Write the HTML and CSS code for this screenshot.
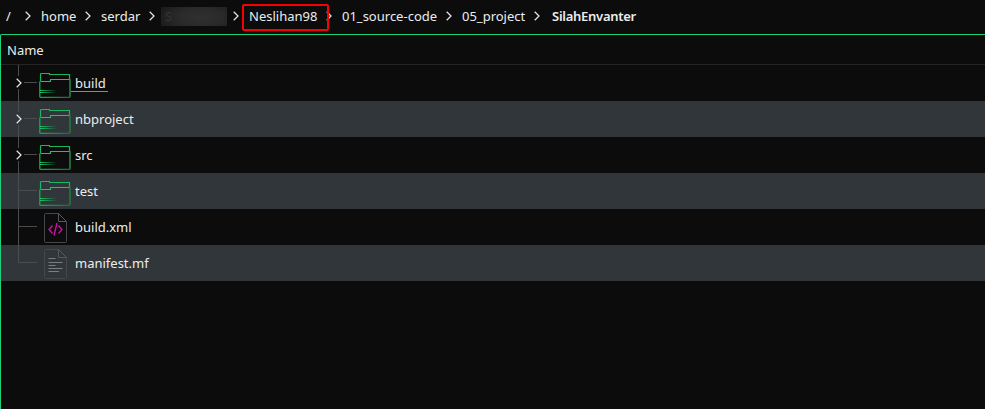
FILE: index.html
```html
<!DOCTYPE html>
<html lang="en">
<head>
<meta charset="utf-8">
<title>SilahEnvanter</title>
<link rel="stylesheet" href="styles.css">
</head>
<body>
<svg class="defs" width="0" height="0">
  <defs>
    <linearGradient id="body" x1="0" x2="1"><stop offset="0" stop-color="#13a653"/><stop offset=".5" stop-color="#1a8a4a"/><stop offset="1" stop-color="#1f6a3d"/></linearGradient>
    <linearGradient id="fade" x1="0" x2="1"><stop offset="0" stop-color="#13c95f"/><stop offset="1" stop-color="#13c95f" stop-opacity="0"/></linearGradient>
    <symbol id="chevron" viewBox="0 0 6 10"><path d="M.7 .7 5 5 .7 9.3" fill="none" stroke="#e4e4e4" stroke-width="1.25"/></symbol>
    <symbol id="folder" viewBox="0 0 32 26">
      <path d="M1.5 9V2Q1.5 1.5 2.5 1.5H10.5V2.5H30.5V7" fill="none" stroke="#17b85f" stroke-width="1.2"/>
      <path d="M1.5 9.5Q.8 9.5 .8 10.5V24.5Q.8 25.3 1.5 25.3H30Q31.3 25.3 31.3 24V7.5H30" fill="none" stroke="url(#body)" stroke-width="1.3"/>
      <path d="M1.5 9.5H11.5V7.5H30.5" fill="none" stroke="#1bc465" stroke-width="1.1"/>
      <path d="M30.8 8V25" stroke="#22703f" stroke-width="1.4"/>
      <path d="M1 18h17v1H1zM1 20h17v1H1z" fill="url(#fade)"/>
    </symbol>
    <symbol id="sheet" viewBox="0 0 24 30">
      <path d="M14.5 .5H1.5Q.5 .5 .5 1.5V28.5Q.5 29.5 1.5 29.5H21.5Q22.5 29.5 22.5 28.5V8.5Z" fill="none" stroke="#454748"/>
      <path d="M14.5 .5V8.5H22.5Z" fill="none" stroke="#56585a"/>
    </symbol>
  </defs>
</svg>

<nav class="path">
  <span class="crumb">/<svg class="chev"><use href="#chevron"/></svg></span>
  <span class="crumb">home<svg class="chev"><use href="#chevron"/></svg></span>
  <span class="crumb">serdar<svg class="chev"><use href="#chevron"/></svg></span>
  <span class="crumb"><span class="hidden-name">S</span><svg class="chev"><use href="#chevron"/></svg></span>
  <span class="crumb marked">Neslihan98<svg class="chev"><use href="#chevron"/></svg></span>
  <span class="crumb">01_source-code<svg class="chev"><use href="#chevron"/></svg></span>
  <span class="crumb">05_project<svg class="chev"><use href="#chevron"/></svg></span>
  <span class="crumb current">SilahEnvanter</span>
</nav>

<main class="view">
  <header class="head">Name</header>
  <ul class="tree">
    <li class="row"><span class="branch open"><svg class="chev"><use href="#chevron"/></svg></span><svg class="folder"><use href="#folder"/></svg><span class="name hovered">build</span></li>
    <li class="row"><span class="branch open"><svg class="chev"><use href="#chevron"/></svg></span><svg class="folder"><use href="#folder"/></svg><span class="name">nbproject</span></li>
    <li class="row"><span class="branch open"><svg class="chev"><use href="#chevron"/></svg></span><svg class="folder"><use href="#folder"/></svg><span class="name">src</span></li>
    <li class="row"><span class="branch"></span><svg class="folder"><use href="#folder"/></svg><span class="name">test</span></li>
    <li class="row"><span class="branch"></span><svg class="file" viewBox="0 0 24 30"><use href="#sheet"/><path d="M8.5 12.5 5 16.5 8.5 20.5M14.5 12.5 18 16.5 14.5 20.5M13 10 10 22.5" fill="none" stroke="#cf0fa2" stroke-width="1.4"/></svg><span class="name">build.xml</span></li>
    <li class="row"><span class="branch last"></span><svg class="file" viewBox="0 0 24 30"><use href="#sheet"/><path d="M4.5 9.5H11.5M4.5 13.5H18.5M4.5 16.5H11.5M4.5 19.5H18.5M4.5 22.5H15" fill="none" stroke="#7b7e80" stroke-width="1.2"/></svg><span class="name">manifest.mf</span></li>
  </ul>
</main>
</body>
</html>
```

FILE: styles.css
```css
*, ::after { box-sizing: border-box; }
body {
  margin: 0;
  height: 409px;
  overflow: hidden;
  background: #0c0c0c;
  color: #ececec;
  font: 13px/18px "Noto Sans", sans-serif;
  display: flex;
  flex-direction: column;
}
.defs { position: absolute; }
.chev { width: 6px; height: 10px; flex: none; }
.path {
  height: 34px;
  padding: 6px 0 0 6px;
  display: grid;
  grid-template-columns: 25px 50px 54px 74px 83px 110px 78px auto;
  column-gap: 10px;
  align-items: start;
  white-space: nowrap;
}
.crumb {
  display: flex;
  justify-content: space-between;
  align-items: center;
  height: 20px;
  position: relative;
}
.marked::after {
  content: "";
  position: absolute;
  left: -7px;
  top: -2px;
  width: 87px;
  height: 27px;
  border: 2px solid #fb0003;
  border-radius: 2px;
}
.hidden-name {
  width: 66px;
  height: 19px;
  margin-left: -4px;
  padding-left: 4px;
  color: #303536;
  background: radial-gradient(ellipse 75% 110% at 60% 55%, #303030, #2a2a2a 45%, #181818);
}
.current { padding-left: 2px; font-weight: 600; letter-spacing: -.27px; justify-content: flex-start; }
.view {
  flex: 1;
  border: solid #1fd07c;
  border-width: 1px 0 0 1px;
  border-top-left-radius: 2px;
}
.head {
  height: 30px;
  padding: 6px 6px 0;
  border-bottom: 1px solid #252525;
}
.tree { margin: 0; padding: 0; list-style: none; }
.row { height: 36px; display: flex; align-items: center; }
.row:nth-child(even) { background: #31363b; }
.branch {
  width: 38px;
  height: 36px;
  flex: none;
  padding: 13px 0 0 15px;
  background:
    linear-gradient(#4b4c4d, #4b4c4d) 17px 0 / 1px 36px no-repeat,
    linear-gradient(#4b4c4d, #4b4c4d) 18px 17px / 18px 1px no-repeat;
}
.branch.open {
  background:
    linear-gradient(#4b4c4d, #4b4c4d) 17px 0 / 1px 11px no-repeat,
    linear-gradient(#4b4c4d, #4b4c4d) 17px 24px / 1px 12px no-repeat,
    linear-gradient(#4b4c4d, #4b4c4d) 23px 17px / 13px 1px no-repeat;
}
.branch.last {
  background:
    linear-gradient(#4b4e50, #4b4e50) 17px 0 / 1px 18px no-repeat,
    linear-gradient(#4b4e50, #4b4e50) 18px 17px / 18px 1px no-repeat;
}
.branch .chev { display: block; }
.folder { width: 32px; height: 26px; margin-top: 4px; flex: none; }
.file { width: 24px; height: 30px; margin: 1px 3px 0 5px; flex: none; }
.name { height: 18px; padding: 0 2px 0 4px; }
.hovered { border-bottom: 1px solid #1cc568; }
```
